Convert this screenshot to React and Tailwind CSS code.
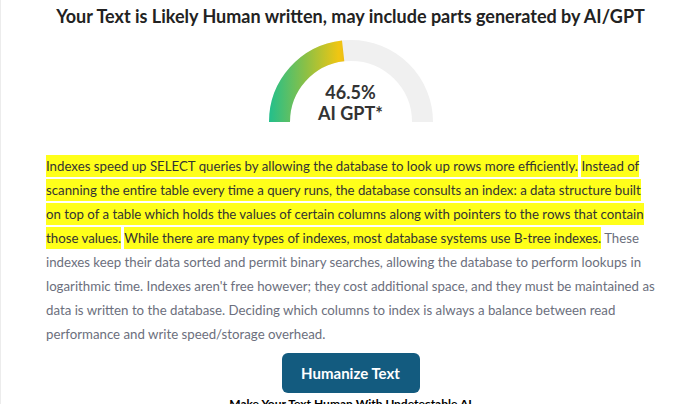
import React from "react";

const lines = [
  [["h", "Indexes speed up SELECT queries by allowing the database to look up rows more efficiently."], ["s", " "], ["h", "Instead of"]],
  [["h", "scanning the entire table every time a query runs, the database consults an index: a data structure built"]],
  [["h", "on top of a table which holds the values of certain columns along with pointers to the rows that contain"]],
  [["h", "those values."], ["s", " "], ["h", "While there are many types of indexes, most database systems use B-tree indexes."], ["n", " These"]],
  [["n", "indexes keep their data sorted and permit binary searches, allowing the database to perform lookups in"]],
  [["n", "logarithmic time. Indexes aren't free however; they cost additional space, and they must be maintained as"]],
  [["n", "data is written to the database. Deciding which columns to index is always a balance between read"]],
  [["n", "performance and write speed/storage overhead."]],
];

function Gauge() {
  const cx = 82, cy = 82, r = 71.5;
  const pct = 0.465;
  const a = Math.PI * (1 - pct);
  const ex = cx + r * Math.cos(a);
  const ey = cy - r * Math.sin(a);
  return (
    <div className="relative w-[164px] h-[82px]">
      <svg width="164" height="82" viewBox="0 0 164 82" className="absolute left-0 top-0">
        <defs>
          <linearGradient id="g" x1="0" y1="0" x2="82" y2="0" gradientUnits="userSpaceOnUse">
            <stop offset="0" stopColor="#22bf8c" />
            <stop offset="0.45" stopColor="#8cc045" />
            <stop offset="0.85" stopColor="#f0c612" />
            <stop offset="1" stopColor="#ecb31a" />
          </linearGradient>
        </defs>
        <path d={`M ${cx - r} ${cy} A ${r} ${r} 0 0 1 ${cx + r} ${cy}`} fill="none" stroke="#f0f0f0" strokeWidth="21" />
        <path d={`M ${cx - r} ${cy} A ${r} ${r} 0 0 1 ${ex} ${ey}`} fill="none" stroke="url(#g)" strokeWidth="21" />
      </svg>
      <div className="absolute left-0 right-0 top-[42px] flex flex-col items-center text-[18px] leading-[21px] font-bold text-[#333333]">
        <span>46.5%</span>
        <span>AI GPT*</span>
      </div>
    </div>
  );
}

export default function App() {
  return (
    <div className="w-[700px] h-[404px] overflow-hidden bg-white border-l border-[#ececec] flex flex-col items-center" style={{ fontFamily: 'Lato, "Open Sans", sans-serif' }}>
      <h1 className="shrink-0 mt-[3px] text-[18px] leading-[26px] font-bold text-[#222222]">
        Your Text is Likely Human written, may include parts generated by AI/GPT
      </h1>
      <div className="shrink-0 mt-[11px]">
        <Gauge />
      </div>
      <div className="shrink-0 mt-[32px] self-start pl-[45px] text-[13.25px] leading-[24px]">
        {lines.map((ln, i) => (
          <div key={i} className="whitespace-pre">
            {ln.map(([t, s], j) =>
              t === "h" ? (
                <span key={j} className="bg-[#ffff1a] text-[#333333] py-[3px]">{s}</span>
              ) : t === "s" ? (
                <span key={j}>{s}</span>
              ) : (
                <span key={j} className="text-[#6c6f7d]">{s}</span>
              )
            )}
          </div>
        ))}
      </div>
      <button className="shrink-0 mt-[7px] w-[138px] h-[40px] rounded-[6px] bg-[#135b7f] text-white text-[15px] font-bold">
        Humanize Text
      </button>
      <div className="shrink-0 mt-[2px] text-[12px] font-bold text-black leading-[18px]">
        Make Your Text Human With Undetectable AI
      </div>
    </div>
  );
}
